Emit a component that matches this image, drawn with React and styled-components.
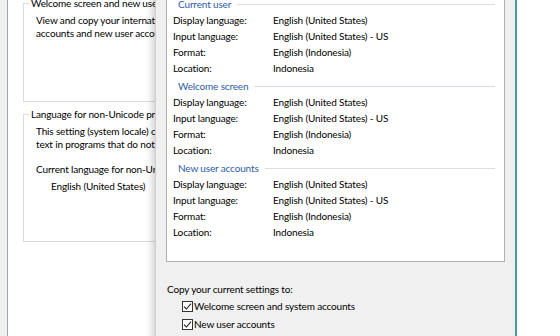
import React from 'react';
import styled, { createGlobalStyle } from 'styled-components';

const Global = createGlobalStyle`
  html, body {
    margin: 0;
    padding: 0;
    width: 560px;
    height: 336px;
    overflow: hidden;
    background: #f0f0f0;
    font-family: Lato, "Noto Sans", sans-serif;
    font-size: 10px;
    letter-spacing: -0.15px;
    color: #000;
  }
`;

const Desktop = styled.div`
  position: relative;
  width: 560px;
  height: 336px;
  overflow: hidden;
`;

// region dialog behind
const BackWindow = styled.div`
  position: absolute;
  left: 0;
  top: -20px;
  width: 560px;
  height: 380px;
  background: #f0f0f0;
  padding-left: 7px;
  box-sizing: border-box;
  display: flex;
`;

const TabPage = styled.div`
  flex: 1;
  background: #fff;
  border-left: 1px solid #9ba8b7;
  padding: 23px 0 0 15px;
  display: flex;
  flex-direction: column;
`;

const Group = styled.div`
  width: 480px;
  height: ${p => p.h}px;
  box-sizing: border-box;
  border: 1px solid #dcdcdc;
  margin-top: ${p => p.mt || 0}px;
  padding: 0 12px;
`;

const GroupTitle = styled.div`
  width: fit-content;
  margin: -7px 0 0 -7px;
  padding: 0 2px;
  background: #fff;
  line-height: 13px;
  white-space: nowrap;
`;

const Line = styled.div`
  line-height: 13px;
  white-space: nowrap;
  margin-top: ${p => p.mt || 0}px;
  padding-left: ${p => p.indent || 0}px;
`;

// front dialog
const Dialog = styled.div`
  position: absolute;
  left: 155px;
  top: -40px;
  width: 362px;
  height: 400px;
  box-sizing: border-box;
  background: #f0f0f0;
  border-left: 1px solid #cdcdcd;
  border-right: 2px solid #489a9c;
  box-shadow: -3px 0 7px rgba(0, 0, 0, 0.18);
  padding: 12px 10px 0;
`;

const Panel = styled.div`
  background: #fff;
  border: 1px solid #b0b0b0;
  padding: 23px 9px 21px 6px;
`;

const Section = styled.div`
  margin-top: ${p => (p.first ? 0 : 2)}px;
`;

const SectionHeader = styled.div`
  display: flex;
  align-items: center;
  height: 16px;
  padding-left: 5px;
  color: #2d5da8;
  white-space: nowrap;

  &::after {
    content: '';
    flex: 1;
    margin-left: 6px;
    border-top: 1px solid #d8dee5;
  }
`;

const Row = styled.div`
  display: flex;
  height: 16px;
  align-items: center;
  white-space: nowrap;
`;

const Label = styled.span`
  width: 100px;
`;

const Value = styled.span``;

const CopyText = styled.div`
  margin-top: 19px;
  padding-left: 1px;
  line-height: 16px;
`;

const CheckRow = styled.label`
  display: flex;
  align-items: center;
  gap: 1px;
  height: 18px;
  padding-left: 16px;
`;

const Box = styled.span`
  width: 11px;
  height: 11px;
  box-sizing: border-box;
  border: 1px solid #333;
  background: #fff;
  display: flex;
  align-items: center;
  justify-content: center;
`;

const Check = () => (
  <Box>
    <svg width="9" height="9" viewBox="0 0 9 9">
      <polyline points="1,4.6 3.4,7 8,1.6" fill="none" stroke="#222" strokeWidth="1.1" />
    </svg>
  </Box>
);

const sections = [
  { title: 'Current user', input: 'English (United States) - US' },
  { title: 'Welcome screen', input: 'English (United States) - US' },
  { title: 'New user accounts', input: 'English (United States) - US' },
];

export default function App() {
  return (
    <Desktop>
      <Global />
      <BackWindow>
        <TabPage>
          <Group h={99}>
            <GroupTitle>Welcome screen and new user accounts</GroupTitle>
            <Line mt={4}>View and copy your international settings to the welcome screen and system</Line>
            <Line>accounts and new user accounts.</Line>
          </Group>
          <Group h={128} mt={12}>
            <GroupTitle>Language for non-Unicode programs</GroupTitle>
            <Line mt={4}>This setting (system locale) controls the language used when displaying</Line>
            <Line>text in programs that do not support Unicode.</Line>
            <Line mt={12}>Current language for non-Unicode programs:</Line>
            <Line mt={4} indent={15}>English (United States)</Line>
          </Group>
        </TabPage>
      </BackWindow>

      <Dialog>
        <Panel>
          {sections.map((s, i) => (
            <Section key={s.title} first={i === 0}>
              <SectionHeader>{s.title}</SectionHeader>
              <Row><Label>Display language:</Label><Value>English (United States)</Value></Row>
              <Row><Label>Input language:</Label><Value>{s.input}</Value></Row>
              <Row><Label>Format:</Label><Value>English (Indonesia)</Value></Row>
              <Row><Label>Location:</Label><Value>Indonesia</Value></Row>
            </Section>
          ))}
        </Panel>
        <CopyText>Copy your current settings to:</CopyText>
        <CheckRow><Check />Welcome screen and system accounts</CheckRow>
        <CheckRow><Check />New user accounts</CheckRow>
      </Dialog>
    </Desktop>
  );
}
